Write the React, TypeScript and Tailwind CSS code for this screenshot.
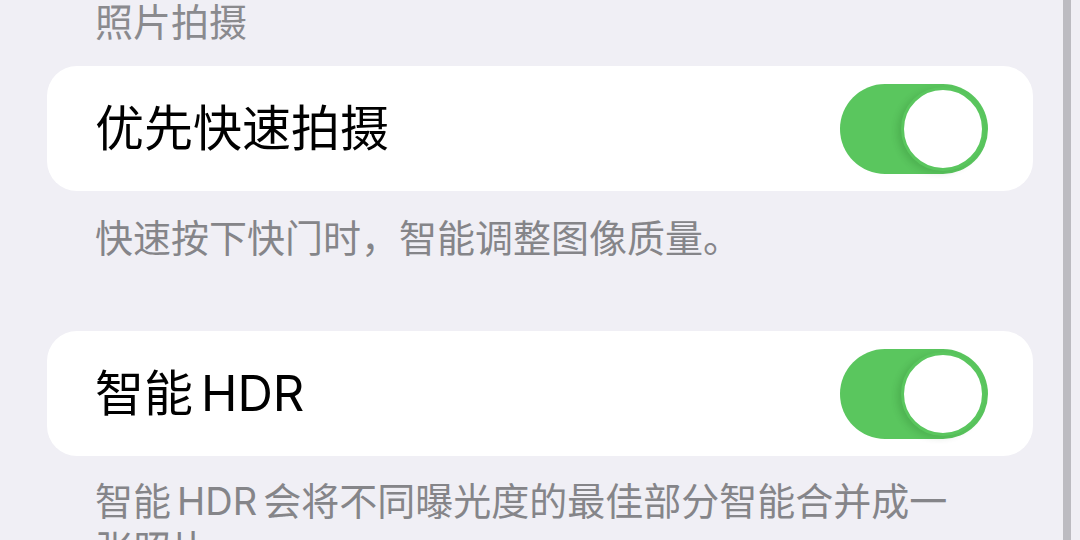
import React from "react";

type ToggleProps = { on: boolean };

function Toggle({ on }: ToggleProps) {
  return (
    <div
      className={`relative flex h-[90px] w-[148px] shrink-0 items-center rounded-full p-[3px] ${
        on ? "justify-end bg-[#5ac65e]" : "justify-start bg-[#e5e5ea]"
      }`}
    >
      <div className="h-[84px] w-[84px] rounded-full border-[3px] border-[#5ac65e] bg-white shadow-[-4px_2px_7px_rgba(0,60,0,0.14)]"></div>
    </div>
  );
}

type RowProps = { children: React.ReactNode; on: boolean };

function ToggleRow({ children, on }: RowProps) {
  return (
    <div className="flex h-[125px] items-center justify-between rounded-[30px] bg-white pl-[48px] pr-[45px]">
      <span className="text-[49px] leading-none text-black">{children}</span>
      <Toggle on={on} />
    </div>
  );
}

export default function App() {
  return (
    <div
      className="relative h-[540px] w-[1080px] overflow-hidden bg-[#f0eff5]"
      style={{ fontFamily: 'Inter, "Noto Sans CJK SC", sans-serif' }}
    >
      <div className="flex w-[1033px] flex-col pl-[47px]">
        <div className="pl-[48px] text-[38px] leading-[44px] text-[#8a8a8e]">照片拍摄</div>

        <div className="mt-[22px]">
          <ToggleRow on={true}>优先快速拍摄</ToggleRow>
        </div>
        <p className="mt-[23px] pl-[48px] text-[38px] leading-[48px] text-[#858589]">
          快速按下快门时，智能调整图像质量。
        </p>

        <div className="mt-[69px]">
          <ToggleRow on={true}>
            智能<span className="ml-[8px]">HDR</span>
          </ToggleRow>
        </div>
        <p className="mt-[21px] w-[913px] pl-[48px] text-[38px] leading-[48px] text-[#858589]">
          智能<span className="mx-[6px]">HDR</span>会将不同曝光度的最佳部分智能合并成一张照片。
        </p>
      </div>

      {/* scroll indicator along the right edge */}
      <div className="absolute right-[9px] top-0 h-full w-[8px] bg-[#bcbbc1]"></div>
    </div>
  );
}
